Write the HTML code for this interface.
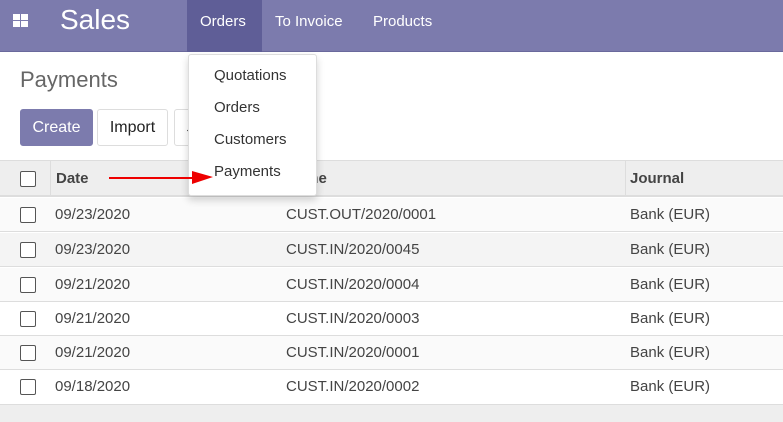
<!DOCTYPE html>
<html><head><style>
*{box-sizing:border-box;margin:0;padding:0}
body{width:783px;height:422px;overflow:hidden;font-family:"Liberation Sans",sans-serif;background:#fff;position:relative;color:#4c4c4c}
.nav{position:absolute;left:0;top:0;width:783px;height:52px;background:#7c7bad;border-bottom:1px solid #6a699c}
.nav .t{position:absolute;color:#fff;font-size:15px;top:13px}
.sales{position:absolute;left:60px;top:4px;font-size:28px;color:#fff}
.orders{position:absolute;left:187px;top:0;width:75px;height:52px;background:#5f5e97}
.ab{position:absolute}
.btn{position:absolute;top:109px;height:37px;border:1px solid #ddd;border-radius:3px;font-size:16px;line-height:35px;text-align:center;color:#222;background:#fff}
.hdr{position:absolute;left:0;top:160px;width:783px;height:37px;background:#eee;border-top:1px solid #ddd;border-bottom:2px solid #ddd}
.row{position:absolute;left:0;width:783px;height:34px;border-bottom:1px solid #ddd;font-size:15px;color:#444}
.row span{position:absolute;top:8px}
.cb{position:absolute;left:20px;width:16px;height:16px;border:1px solid #555;border-radius:2px;background:#fff}
.dd{position:absolute;left:188px;top:54px;width:129px;height:142px;background:#fff;border:1px solid #ddd;border-radius:3px;box-shadow:0 4px 8px rgba(0,0,0,.18)}
.dd div{position:absolute;left:25px;font-size:15px;color:#333}
</style></head><body>
<div class="nav">
<div class="orders"></div>
<svg class="ab" style="left:13px;top:14px" width="16" height="14"><rect x="0" y="0" width="7" height="6" fill="#fff"/><rect x="8" y="0" width="7" height="6" fill="#fff"/><rect x="0" y="7" width="7" height="6" fill="#fff"/><rect x="8" y="7" width="7" height="6" fill="#fff"/></svg>
<div class="sales">Sales</div>
<div class="t" style="left:200px">Orders</div>
<div class="t" style="left:275px">To Invoice</div>
<div class="t" style="left:373px">Products</div>
</div>
<div class="ab" style="left:20px;top:67px;font-size:22px;color:#666">Payments</div>
<div class="btn" style="left:20px;width:73px;background:#7c7bad;border-color:#7c7bad;color:#fff">Create</div>
<div class="btn" style="left:97px;width:71px">Import</div>
<div class="btn" style="left:174px;width:30px">↓</div>
<div style="position:absolute;left:0;top:405px;width:783px;height:17px;background:#eee"></div>
<div class="hdr">
<div class="cb" style="top:10px"></div>
<div class="ab" style="left:50px;top:0;width:1px;height:35px;background:#ddd"></div>
<div class="ab" style="left:625px;top:0;width:1px;height:35px;background:#ddd"></div>
<div class="ab" style="left:56px;top:9px;font-size:15px;font-weight:bold;color:#444">Date</div>
<div class="ab" style="left:286px;top:9px;font-size:15px;font-weight:bold;color:#444">Name</div>
<div class="ab" style="left:630px;top:9px;font-size:15px;font-weight:bold;color:#444">Journal</div>
</div>
<div class="row" style="top:198px;background:#fafafa"><div class="cb" style="top:9px"></div><span style="left:55px">09/23/2020</span><span style="left:286px">CUST.OUT/2020/0001</span><span style="left:630px">Bank (EUR)</span></div>
<div class="row" style="top:233px;background:#f4f4f4"><div class="cb" style="top:9px"></div><span style="left:55px">09/23/2020</span><span style="left:286px">CUST.IN/2020/0045</span><span style="left:630px">Bank (EUR)</span></div>
<div class="row" style="top:268px;background:#fafafa"><div class="cb" style="top:9px"></div><span style="left:55px">09/21/2020</span><span style="left:286px">CUST.IN/2020/0004</span><span style="left:630px">Bank (EUR)</span></div>
<div class="row" style="top:302px;background:#fff"><div class="cb" style="top:9px"></div><span style="left:55px">09/21/2020</span><span style="left:286px">CUST.IN/2020/0003</span><span style="left:630px">Bank (EUR)</span></div>
<div class="row" style="top:336px;background:#fafafa"><div class="cb" style="top:9px"></div><span style="left:55px">09/21/2020</span><span style="left:286px">CUST.IN/2020/0001</span><span style="left:630px">Bank (EUR)</span></div>
<div class="row" style="top:370px;background:#fff;height:35px"><div class="cb" style="top:9px"></div><span style="left:55px">09/18/2020</span><span style="left:286px">CUST.IN/2020/0002</span><span style="left:630px">Bank (EUR)</span></div>
<div class="dd">
<div style="top:12px">Quotations</div>
<div style="top:44px">Orders</div>
<div style="top:76px">Customers</div>
<div style="top:108px">Payments</div>
</div>
<svg class="ab" style="left:105px;top:168px" width="115" height="20"><line x1="4" y1="10" x2="90" y2="10" stroke="#e00" stroke-width="2"/><polygon points="87,3 108,9 87,16" fill="#e00"/></svg>
</body></html>
